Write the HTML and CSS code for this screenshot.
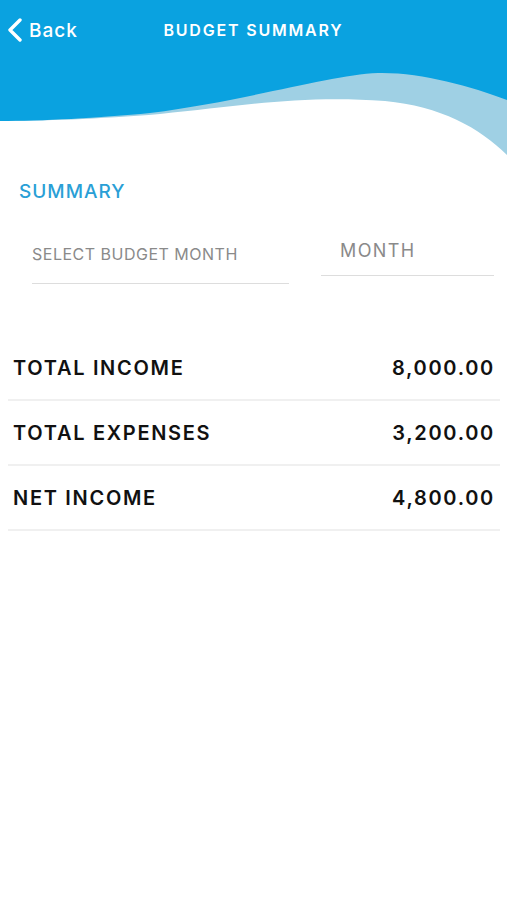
FILE: index.html
```html
<!DOCTYPE html>
<html lang="en">
<head>
    <meta charset="UTF-8">
    <meta name="viewport" content="width=device-width, initial-scale=1.0">
    <title>Budget Summary</title>
    <link rel="stylesheet" href="styles.css">
</head>
<body>
    <div class="header">
        <svg class="wave" viewBox="0 0 507 160" preserveAspectRatio="none">
            <path fill="#9fd0e4" d="M0 0 H507 V155 C480 128 440 106 385 101 C300 95 240 106 160 114 C100 119 40 121 0 121 Z"/>
            <path fill="#0aa2e0" d="M0 0 H507 V100 C470 86 420 72 378 73 C330 75 250 100 150 113 C100 118 40 121 0 121 Z"/>
        </svg>
        <div class="nav">
            <a class="back" href="#">
                <svg width="16" height="24" viewBox="0 0 16 24">
                    <path d="M13 2 L3 12 L13 22" fill="none" stroke="#fff" stroke-width="3.4" stroke-linecap="round" stroke-linejoin="round"/>
                </svg>
                <span>Back</span>
            </a>
            <h1 class="title">BUDGET SUMMARY</h1>
            <span></span>
        </div>
    </div>

    <div class="content">
        <h2 class="section-title">SUMMARY</h2>
        <div class="fields">
            <div class="field field-select">SELECT BUDGET MONTH</div>
            <div class="field field-month">MONTH</div>
        </div>
    </div>

    <div class="rows">
        <div class="row">
            <span class="label">TOTAL INCOME</span>
            <span class="value">8,000.00</span>
        </div>
        <div class="row">
            <span class="label">TOTAL EXPENSES</span>
            <span class="value">3,200.00</span>
        </div>
        <div class="row">
            <span class="label">NET INCOME</span>
            <span class="value">4,800.00</span>
        </div>
    </div>
</body>
</html>
```

FILE: styles.css
```css
body {
    font-family: Inter, "Liberation Sans", sans-serif;
    margin: 0;
    padding: 0;
    background-color: #fff;
    color: #111;
}

.header {
    position: relative;
    height: 160px;
}

.wave {
    position: absolute;
    top: 0;
    left: 0;
    width: 100%;
    height: 100%;
    display: block;
}

.nav {
    position: relative;
    display: grid;
    grid-template-columns: 1fr auto 1fr;
    align-items: center;
    height: 60px;
    padding: 0 7px;
}

.back {
    display: flex;
    align-items: center;
    gap: 6px;
    color: white;
    text-decoration: none;
    font-size: 19px;
    font-weight: 500;
    letter-spacing: 1px;
}

.back svg {
    display: block;
}

.title {
    margin: 0;
    color: white;
    font-size: 16px;
    font-weight: 600;
    letter-spacing: 1.8px;
}

.content {
    padding: 20px 13px 0 19px;
}

.section-title {
    margin: 0;
    color: #2a9fd6;
    font-size: 19px;
    font-weight: 500;
    line-height: 24px;
    letter-spacing: 1px;
}

.fields {
    display: flex;
    align-items: flex-start;
    gap: 32px;
    margin-top: 40px;
    padding-left: 13px;
}

.field {
    color: #8a8a8a;
    border-bottom: 1px solid #ddd;
}

.field-select {
    width: 257px;
    font-size: 16px;
    letter-spacing: 0.5px;
    padding-bottom: 19px;
}

.field-month {
    flex: 1;
    font-size: 18px;
    letter-spacing: 1.4px;
    padding: 0 0 14px 19px;
    margin-top: -4px;
}

.rows {
    margin: 52px 7px 0 8px;
}

.row {
    display: flex;
    justify-content: space-between;
    align-items: center;
    height: 63px;
    padding: 0 5px;
    border-bottom: 2px solid #f0f0f0;
}

.label,
.value {
    font-size: 20px;
    font-weight: 600;
    letter-spacing: 1.7px;
}
```
